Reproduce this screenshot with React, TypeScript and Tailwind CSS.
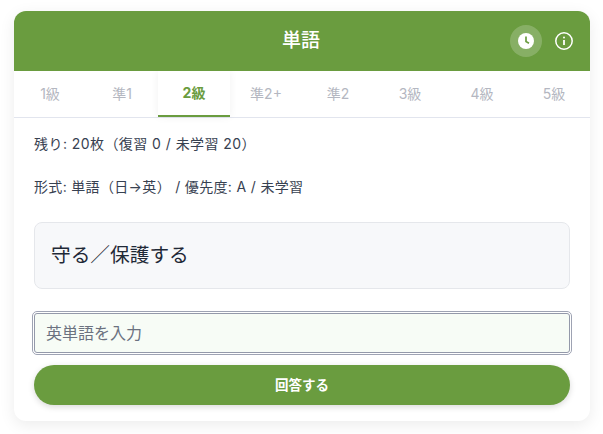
export default function App() {
  const tabs = ["1級", "準1", "2級", "準2+", "準2", "3級", "4級", "5級"];
  return (
    <div className="w-[603px] h-[434px] bg-white pt-[11px] pl-[14px] overflow-hidden font-['Inter','Noto_Sans_CJK_JP',sans-serif]">
      <div className="w-[576px] h-[410px] bg-white rounded-xl overflow-hidden shadow-[0_4px_16px_rgba(0,0,0,0.08)]">
        <header className="relative h-[60px] bg-[#6a9c3f] flex items-center justify-center pr-[2px]">
          <span className="text-white text-[19px] font-medium">単語</span>
          <div className="absolute right-[17px] top-[14px] flex items-center gap-[13px]">
            <span className="w-8 h-8 rounded-full bg-white/20 flex items-center justify-center">
              <svg width="16" height="16" viewBox="0 0 16 16">
                <circle cx="8" cy="8" r="8" fill="#fff" />
                <path d="M8 3.5V8.6L11 10.2" fill="none" stroke="#6a9c3f" strokeWidth="1.7" />
              </svg>
            </span>
            <svg width="18" height="18" viewBox="0 0 18 18" fill="none" stroke="#fff" strokeWidth="1.5">
              <circle cx="9" cy="9" r="8.2" />
              <path d="M9 8v5" strokeWidth="1.8" />
              <circle cx="9" cy="5.4" r="1" fill="#fff" stroke="none" />
            </svg>
          </div>
        </header>
        <nav className="grid grid-cols-8 h-[47px] border-b border-[#e2e5ee]">
          {tabs.map((t) => (
            <div
              key={t}
              className={
                t === "2級"
                  ? "flex items-center justify-center text-sm font-bold text-[#6a9c3f] border-b-[2px] border-[#6a9c3f] shadow-[0_0_8px_rgba(0,0,0,0.06)]"
                  : "flex items-center justify-center text-sm text-[#b4b7c1]"
              }
            >
              {t}
            </div>
          ))}
        </nav>
        <main className="px-5">
          <p className="mt-4 h-[20px] leading-[20px] text-sm tracking-[0.44px] text-[#374151]">残り: 20枚（復習 0 / 未学習 20）</p>
          <p className="mt-[23px] h-[20px] leading-[20px] text-sm tracking-[0.33px] text-[#374151]">形式: 単語（日→英） / 優先度: A / 未学習</p>
          <div className="mt-[25px] h-[67px] rounded-lg border border-[#e5e7eb] bg-[#f7f8fa] flex items-center px-4 text-[19.7px] text-[#1f2937]">
            守る／保護する
          </div>
          <div className="mt-[24px] h-[40px] rounded-[3px] border border-[#9499aa] bg-[#f7fcf6] outline outline-1 outline-offset-[1px] outline-[#9ea3b3] flex items-center px-[11px] text-base text-[#6b7280]">
            英単語を入力
          </div>
          <button className="mt-[12px] w-full h-10 rounded-full bg-[#6a9c3f] text-white text-[13.5px] font-semibold shadow-[0_2px_6px_rgba(0,0,0,0.15)]">
            回答する
          </button>
        </main>
      </div>
    </div>
  );
}
